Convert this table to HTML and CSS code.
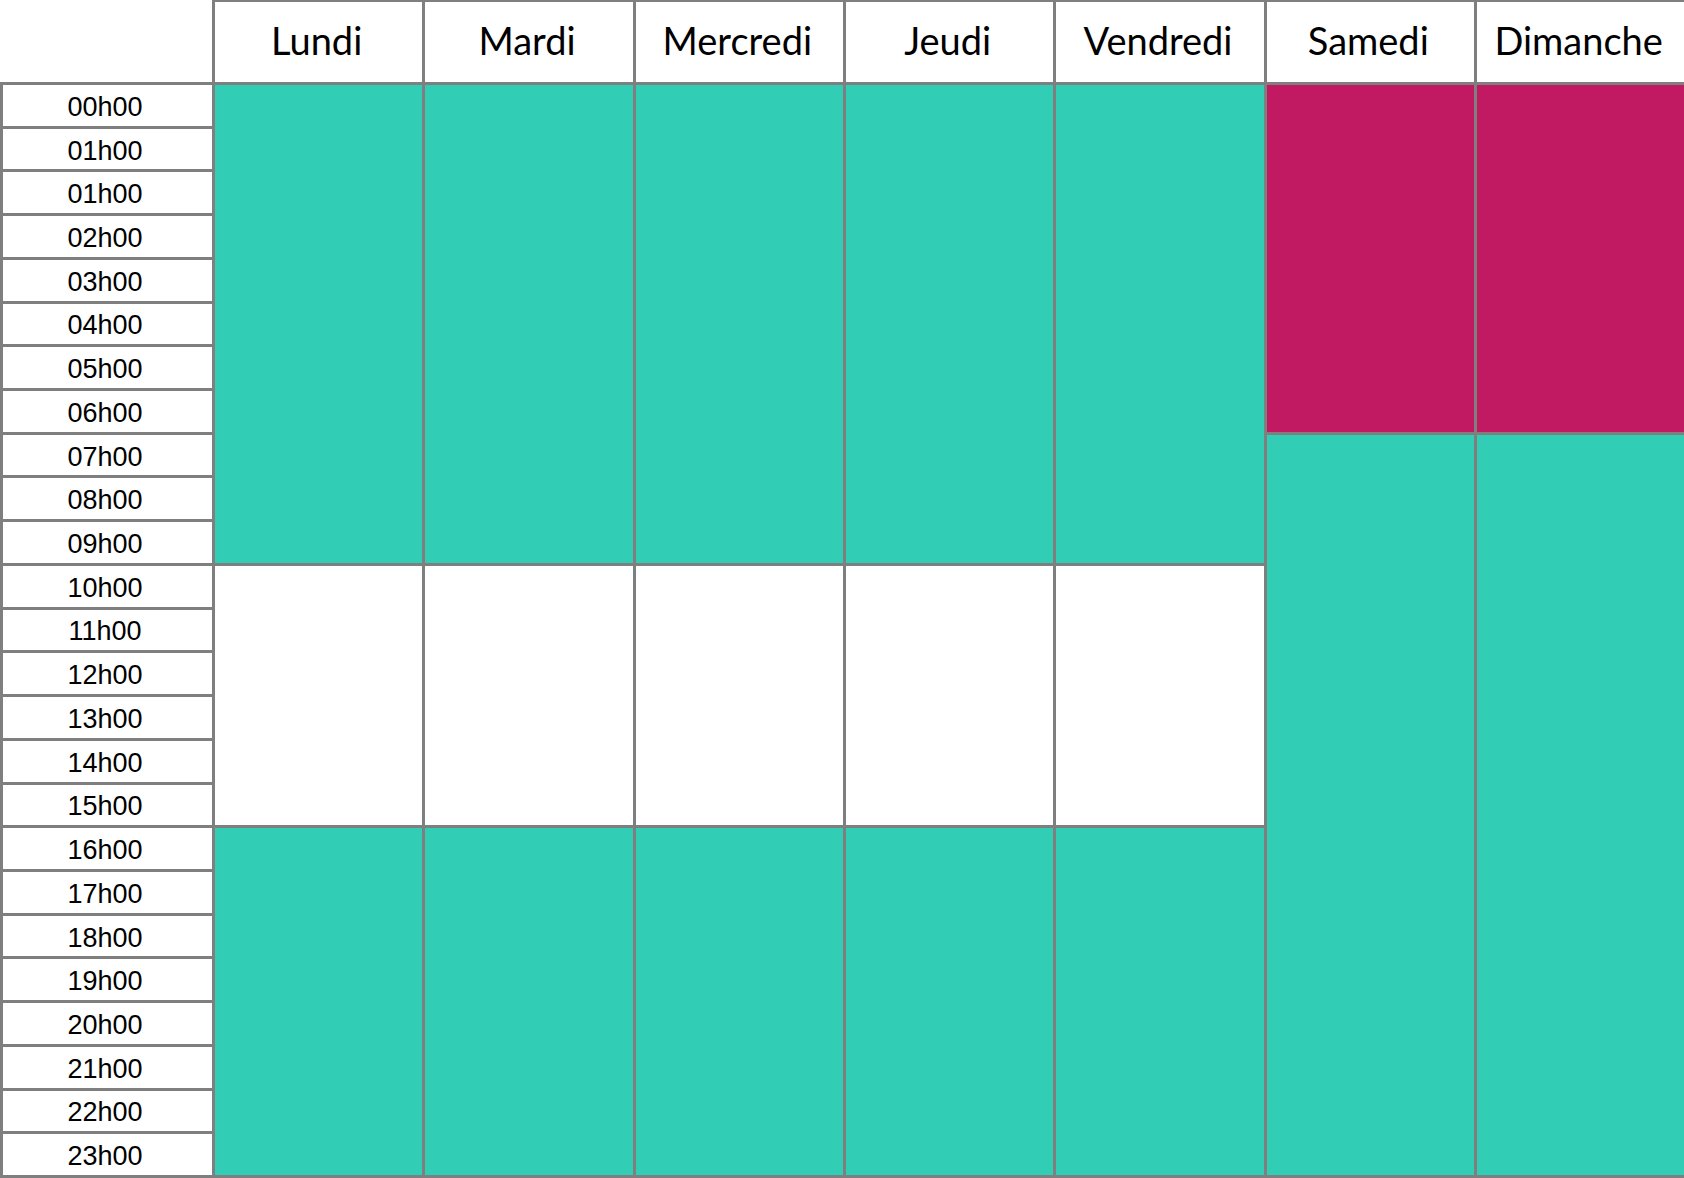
FILE: index.html
```html
<!DOCTYPE html>
<html lang="fr">
<head>
    <meta charset="UTF-8">
    <meta name="viewport" content="width=device-width, initial-scale=1.0">
    <title>Horaires</title>
    <link rel="stylesheet" href="styles.css">
</head>
<body>
    <div class="schedule">
        <div class="head corner"></div>
        <div class="head day">Lundi</div>
        <div class="head day">Mardi</div>
        <div class="head day">Mercredi</div>
        <div class="head day">Jeudi</div>
        <div class="head day">Vendredi</div>
        <div class="head day">Samedi</div>
        <div class="head day">Dimanche</div>

        <div class="hour">00h00</div>
        <div class="hour">01h00</div>
        <div class="hour">01h00</div>
        <div class="hour">02h00</div>
        <div class="hour">03h00</div>
        <div class="hour">04h00</div>
        <div class="hour">05h00</div>
        <div class="hour">06h00</div>
        <div class="hour">07h00</div>
        <div class="hour">08h00</div>
        <div class="hour">09h00</div>
        <div class="hour">10h00</div>
        <div class="hour">11h00</div>
        <div class="hour">12h00</div>
        <div class="hour">13h00</div>
        <div class="hour">14h00</div>
        <div class="hour">15h00</div>
        <div class="hour">16h00</div>
        <div class="hour">17h00</div>
        <div class="hour">18h00</div>
        <div class="hour">19h00</div>
        <div class="hour">20h00</div>
        <div class="hour">21h00</div>
        <div class="hour">22h00</div>
        <div class="hour">23h00</div>

        <!-- semaine -->
        <div class="slot open mon morning"></div>
        <div class="slot free mon midday"></div>
        <div class="slot open mon evening"></div>
        <div class="slot open tue morning"></div>
        <div class="slot free tue midday"></div>
        <div class="slot open tue evening"></div>
        <div class="slot open wed morning"></div>
        <div class="slot free wed midday"></div>
        <div class="slot open wed evening"></div>
        <div class="slot open thu morning"></div>
        <div class="slot free thu midday"></div>
        <div class="slot open thu evening"></div>
        <div class="slot open fri morning"></div>
        <div class="slot free fri midday"></div>
        <div class="slot open fri evening"></div>

        <!-- week-end -->
        <div class="slot closed sat night"></div>
        <div class="slot open sat rest"></div>
        <div class="slot closed sun night"></div>
        <div class="slot open sun rest"></div>
    </div>
</body>
</html>
```

FILE: styles.css
```css
html, body {
    margin: 0;
    height: 100%;
    overflow: hidden;
    background: #fff;
}
.schedule {
    display: grid;
    grid-template-columns: 212px repeat(7, 207.33px);
    grid-template-rows: 82px repeat(25, 40.72px);
    gap: 3px;
    padding-bottom: 3px;
    background: #7f7f7f;
    width: max-content;
}
.head {
    grid-row: 1;
    background: #fff;
}
.corner {
    grid-column: 1;
}
.day {
    border-top: 2px solid #7f7f7f;
    display: flex;
    align-items: center;
    justify-content: center;
    font-family: Lato, "Open Sans", sans-serif;
    font-size: 38px;
    color: #000;
    padding-bottom: 4px;
    padding-right: 4px;
}
.hour {
    grid-column: 1;
    background: #fff;
    border-left: 3px solid #7f7f7f;
    display: flex;
    align-items: center;
    justify-content: center;
    font-family: "Liberation Sans", Arial, sans-serif;
    font-size: 27px;
    color: #000;
    padding-top: 4px;
    padding-right: 5px;
}
.slot.open { background: #31cdb4; }
.slot.closed { background: #c21a62; }
.slot.free { background: #fff; }

.mon { grid-column: 2; }
.tue { grid-column: 3; }
.wed { grid-column: 4; }
.thu { grid-column: 5; }
.fri { grid-column: 6; }
.sat { grid-column: 7; }
.sun { grid-column: 8; }

.morning { grid-row: 2 / span 11; }
.midday { grid-row: 13 / span 6; }
.evening { grid-row: 19 / span 8; }
.night { grid-row: 2 / span 8; }
.rest { grid-row: 10 / span 17; }
```
